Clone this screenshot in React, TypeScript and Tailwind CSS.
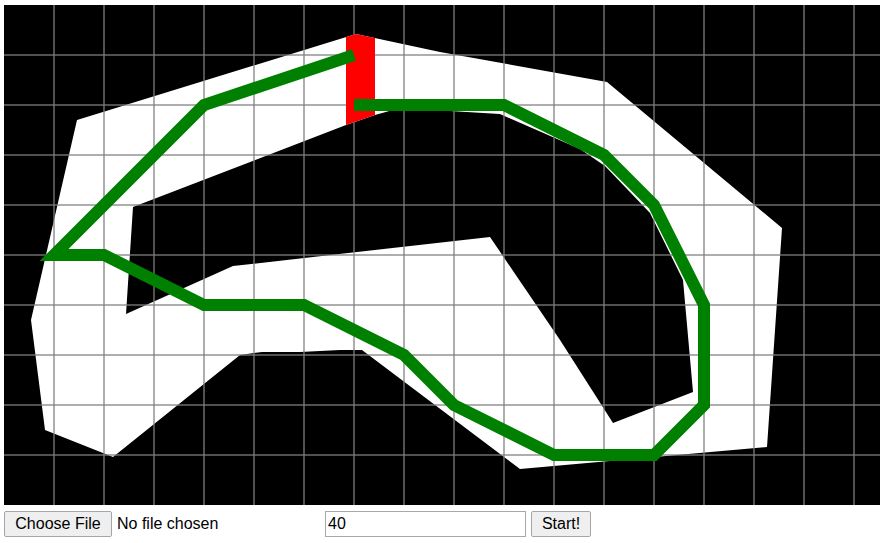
import React from "react";

const outer: [number, number][] = [
  [73, 115], [352, 29], [436, 47], [603, 77], [778, 223], [763, 442], [516, 464],
  [358, 345], [336, 345], [296, 347], [258, 347], [236, 350], [109, 452], [41, 425], [27, 315],
];
const inner: [number, number][] = [
  [129, 202], [342, 120], [371, 110], [396, 103], [496, 109], [576, 144], [601, 161],
  [646, 208], [679, 275], [689, 387], [609, 418], [556, 335], [486, 232], [229, 261], [122, 309],
];
const green: [number, number][] = [
  [350, 50], [200, 100], [50, 250], [100, 250], [200, 300], [300, 300], [400, 350],
  [450, 400], [550, 450], [650, 450], [700, 400], [700, 300], [650, 200], [600, 150],
  [500, 100], [350, 100],
];

const toPath = (pts: [number, number][]) =>
  "M" + pts.map((p) => p.join(" ")).join(" L") + " Z";

function Track() {
  const W = 876;
  const H = 500;
  const vx: number[] = [];
  for (let x = 50; x < W; x += 50) vx.push(x);
  const hy: number[] = [];
  for (let y = 50; y < H; y += 50) hy.push(y);
  return (
    <svg width={W} height={H} viewBox={`0 0 ${W} ${H}`} className="block">
      <rect x={0} y={0} width={W} height={H} fill="#000" />
      <path d={toPath(outer) + " " + toPath(inner)} fill="#fff" fillRule="evenodd" />
      {vx.map((x) => (
        <line key={"v" + x} x1={x} y1={0} x2={x} y2={H} stroke="#808080" strokeOpacity={0.85} strokeWidth={1.5} />
      ))}
      {hy.map((y) => (
        <line key={"h" + y} x1={0} y1={y} x2={W} y2={y} stroke="#808080" strokeOpacity={0.85} strokeWidth={1.5} />
      ))}
      <polygon points="342,32 352,29 371,33 371,110 342,120" fill="#ff0000" />
      <polyline
        points={green.map((p) => p.join(",")).join(" ")}
        fill="none"
        stroke="#008000"
        strokeWidth={12}
        strokeLinejoin="miter"
        strokeMiterlimit={10}
      />
    </svg>
  );
}

export default function App() {
  return (
    <div
      className="w-[886px] h-[543px] bg-white overflow-hidden pl-[4px] pt-[5px]"
      style={{ fontFamily: '"Liberation Sans", Arial, sans-serif' }}
    >
      <Track />
      <div className="flex items-center mt-[6px] h-[26px] text-[16px] text-black">
        <div className="w-[321px] flex items-center">
          <div className="h-[26px] w-[108px] flex items-center justify-center bg-[#efefef] border border-[#a6a6a6] rounded-[2px]">
            Choose File
          </div>
          <span className="ml-[5px]">No file chosen</span>
        </div>
        <div className="h-[26px] w-[201px] border border-[#a9a9a9] bg-white flex items-center pl-[2px]">
          40
        </div>
        <div className="ml-[5px] h-[26px] w-[60px] flex items-center justify-center bg-[#efefef] border border-[#a6a6a6] rounded-[2px]">
          Start!
        </div>
      </div>
    </div>
  );
}
